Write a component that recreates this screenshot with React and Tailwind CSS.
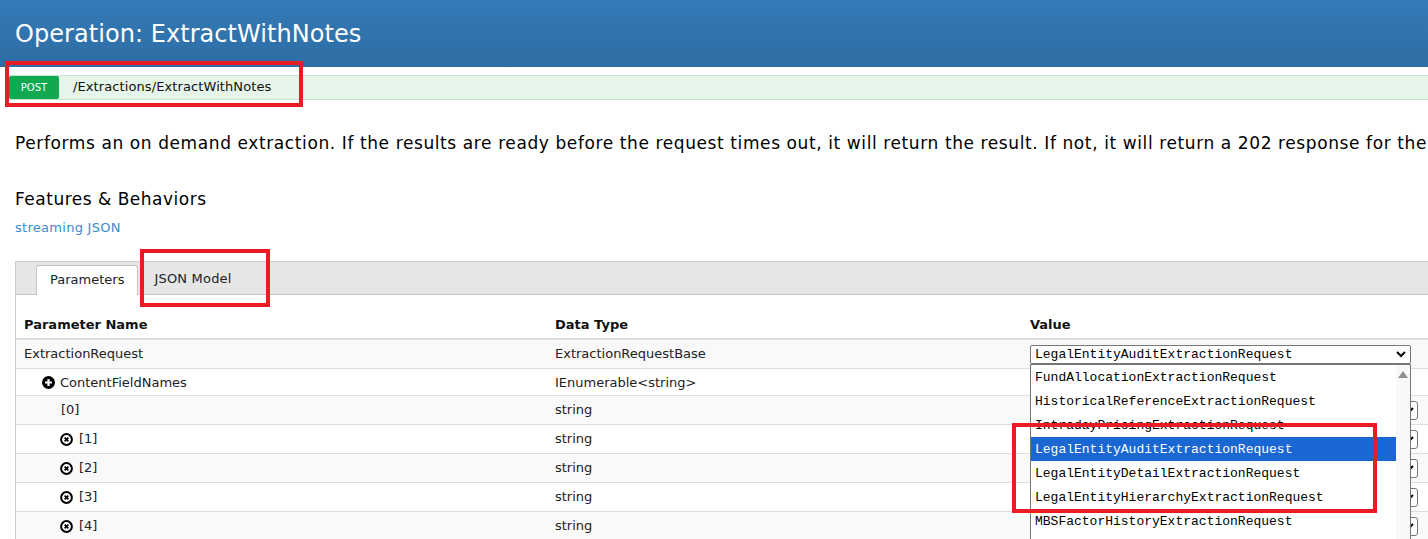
const rows = [
  { name: '[0]', type: 'string', striped: true },
  { name: '[1]', type: 'string', remove: true },
  { name: '[2]', type: 'string', remove: true, striped: true },
  { name: '[3]', type: 'string', remove: true },
  { name: '[4]', type: 'string', remove: true, striped: true },
];

const options = [
  'FundAllocationExtractionRequest',
  'HistoricalReferenceExtractionRequest',
  'IntradayPricingExtractionRequest',
  'LegalEntityAuditExtractionRequest',
  'LegalEntityDetailExtractionRequest',
  'LegalEntityHierarchyExtractionRequest',
  'MBSFactorHistoryExtractionRequest',
];

function PlusIcon() {
  return (
    <svg width="13" height="13" viewBox="0 0 13 13" className="shrink-0">
      <circle cx="6.5" cy="6.5" r="6.5" fill="#000" />
      <path d="M3 6.5h7M6.5 3v7" stroke="#fff" strokeWidth="2.2" />
    </svg>
  );
}

function RemoveIcon() {
  return (
    <svg width="13" height="13" viewBox="0 0 13 13" className="shrink-0">
      <circle cx="6.5" cy="6.5" r="5.4" fill="#fff" stroke="#000" strokeWidth="2" />
      <path d="M4.6 4.6l3.8 3.8M8.4 4.6l-3.8 3.8" stroke="#000" strokeWidth="1.7" />
    </svg>
  );
}

function Chevron() {
  return (
    <svg width="10" height="7" viewBox="0 0 10 7" className="shrink-0">
      <path d="M1 1l4 4 4-4" fill="none" stroke="#000" strokeWidth="2" />
    </svg>
  );
}

function Row({ name, type, striped, remove }) {
  return (
    <div className={`grid grid-cols-[531px_475px_1fr] items-center pl-2 h-[29px] border-b border-[#dddddd] ${striped ? 'bg-[#f9f9f9]' : 'bg-white'}`}>
      <div className={`flex items-center gap-[6px] text-[#222222] ${remove ? 'pl-[36px]' : 'pl-[37px]'}`}>
        {remove && <RemoveIcon />}
        <span>{name}</span>
      </div>
      <div className="text-[#222222]">{type}</div>
      <div className="w-[388px] h-[19px] flex items-center justify-end pr-[3px] bg-white border border-[#767676] rounded-[3px]">
        <Chevron />
      </div>
    </div>
  );
}

export default function App() {
  return (
    <div className="relative h-screen overflow-hidden bg-white text-[13px] whitespace-nowrap font-['DejaVu_Sans',sans-serif]">
      <header className="h-[67px] flex items-center px-[15px] bg-gradient-to-b from-[#337ab7] to-[#2e6da4] text-white text-[24px] tracking-[0.05px]">
        Operation: ExtractWithNotes
      </header>

      <div className="mt-[8px] ml-[9px] h-[25px] flex items-center bg-[#e6f5ea] border-y border-[#c5e5d0]">
        <span className="w-[50px] h-[23px] flex items-center justify-center rounded-[2px] bg-[#11a84f] text-white text-[10px] font-medium">POST</span>
        <span className="ml-[14px] pb-px text-[#111111] tracking-[0.1px]">/Extractions/ExtractWithNotes</span>
      </div>

      <p className="mt-[33px] px-[15px] text-[17px] leading-[20px] tracking-[0.6px] text-black">
        Performs an on demand extraction. If the results are ready before the request times out, it will return the result. If not, it will return a 202 response for the
      </p>

      <h2 className="mt-[36px] px-[15px] text-[17px] leading-[20px] tracking-[0.5px] text-black">Features &amp; Behaviors</h2>

      <a className="block mt-[10px] px-[15px] leading-[18px] tracking-[0.28px] text-[#428bca]">streaming JSON</a>

      <section className="mt-[24px] ml-[15px] w-[1500px] border-l border-t border-[#cccccc]">
        <div className="h-[33px] flex items-end pl-[20px] bg-[#e6e6e6] border-b border-[#c4c4c4]">
          <div className="h-[30px] -mb-px px-[13px] pb-[2px] flex items-center bg-white border border-b-0 border-[#c4c4c4] rounded-t-[3px] text-[#222222]">Parameters</div>
          <div className="h-[30px] -mb-px px-[16px] pb-[2px] flex items-center text-[#222222] tracking-[0.2px]">JSON Model</div>
        </div>

        <div className="grid grid-cols-[531px_475px_1fr] items-center pl-2 h-[45px] pt-[16px] border-b-2 border-[#dddddd] font-bold text-[#111111]">
          <div>Parameter Name</div>
          <div>Data Type</div>
          <div>Value</div>
        </div>

        <div className="grid grid-cols-[531px_475px_1fr] items-center pl-2 h-[29px] bg-[#f9f9f9] border-b border-[#dddddd] text-[#222222]">
          <div>ExtractionRequest</div>
          <div>ExtractionRequestBase</div>
        </div>

        <div className="grid grid-cols-[531px_475px_1fr] items-center pl-2 h-[27px] border-b border-[#dddddd] text-[#222222]">
          <div className="flex items-center gap-[5px] pl-[18px] pt-px">
            <PlusIcon />
            <span>ContentFieldNames</span>
          </div>
          <div className="pt-px">IEnumerable&lt;string&gt;</div>
        </div>

        {rows.map((row) => (
          <Row key={row.name} {...row} />
        ))}
      </section>

      {/* open select and its list */}
      <div className="absolute left-[1030px] top-[345px] w-[381px] font-['Liberation_Mono',monospace] text-black">
        <div className="h-[19px] flex items-center justify-between pl-[4px] pr-[4px] bg-white border border-[#767676] rounded-[2px]">
          <span>LegalEntityAuditExtractionRequest</span>
          <Chevron />
        </div>
        <div className="h-[200px] overflow-hidden flex bg-white border-x border-t border-[#767676]">
          <ul className="flex-1">
            {options.map((o) => (
              <li key={o} className={`h-[24px] flex items-center pl-[4px] pt-[2px] ${o.startsWith('LegalEntityAudit') ? 'bg-[#1a66d2] text-white' : ''}`}>{o}</li>
            ))}
          </ul>
          <div className="w-[14px] bg-[#f8f8f8] flex justify-center pt-[6px]">
            <svg width="10" height="7" viewBox="0 0 10 7"><path d="M5 0l5 7H0z" fill="#8f8f8f" /></svg>
          </div>
        </div>
      </div>

      {/* annotations drawn over the screenshot */}
      <div className="absolute left-[5px] top-[61px] w-[298px] h-[46px] border-[4px] border-[#e81c24]" />
      <div className="absolute left-[140px] top-[249px] w-[130px] h-[58px] border-[4px] border-[#e81c24]" />
      <div className="absolute left-[1012px] top-[423px] w-[365px] h-[90px] border-[4px] border-[#e81c24]" />
    </div>
  );
}
